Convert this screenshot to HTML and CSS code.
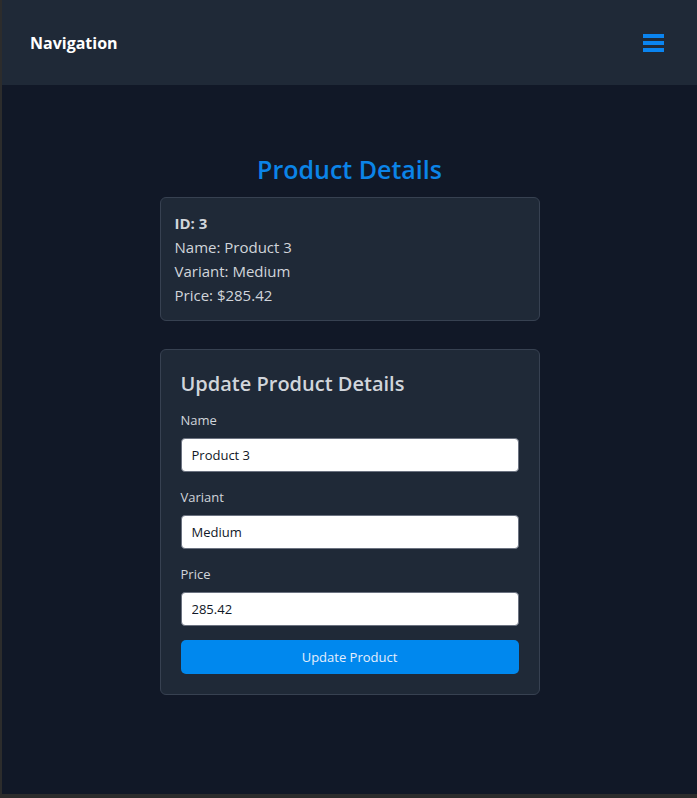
FILE: index.html
```html
<!DOCTYPE html>
<html lang="en">
<head>
<meta charset="utf-8">
<title>Product Details</title>
<link rel="stylesheet" href="styles.css">
</head>
<body>
<div class="frame">
  <header class="topbar">
    <span class="brand">Navigation</span>
    <button class="menu-btn" aria-label="Menu">
      <svg width="22" height="18" viewBox="0 0 22 18"><rect x="0" y="0" width="21" height="4" fill="#0a84f0"/><rect x="0" y="7" width="21" height="4" fill="#0a84f0"/><rect x="0" y="14" width="21" height="4" fill="#0a84f0"/></svg>
    </button>
  </header>
  <main class="content">
    <h1 class="page-title">Product Details</h1>
    <section class="card info">
      <p class="info-id">ID: 3</p>
      <p>Name: Product 3</p>
      <p>Variant: Medium</p>
      <p>Price: $285.42</p>
    </section>
    <section class="card form-card">
      <h2 class="form-title">Update Product Details</h2>
      <form class="form">
        <label class="field">
          <span class="label">Name</span>
          <input class="input" type="text" value="Product 3">
        </label>
        <label class="field">
          <span class="label">Variant</span>
          <input class="input" type="text" value="Medium">
        </label>
        <label class="field">
          <span class="label">Price</span>
          <input class="input" type="text" value="285.42">
        </label>
        <button class="submit" type="button">Update Product</button>
      </form>
    </section>
  </main>
</div>
</body>
</html>
```
FILE: styles.css
```css
* { box-sizing: border-box; }
html, body { margin: 0; padding: 0; }
body {
  font-family: "Open Sans", "Noto Sans", sans-serif;
  background: #2b2b2b;
}
.frame {
  height: 798px;
  border-left: 2px solid #2c2c2c;
  border-bottom: 4px solid #2c2c2c;
  background: #111827;
  display: flex;
  flex-direction: column;
}
.topbar {
  height: 85px;
  background: #1f2937;
  display: flex;
  align-items: center;
  justify-content: space-between;
  padding: 0 32px 0 28px;
}
.brand {
  color: #ffffff;
  font-weight: 700;
  font-size: 16px;
}
.menu-btn {
  background: none;
  border: 0;
  padding: 0;
  display: flex;
}
.content {
  width: 380px;
  margin: 0 auto;
  padding-top: 68px;
}
.page-title {
  margin: 0 0 12px;
  text-align: center;
  color: #0b84e8;
  font-size: 25px;
  line-height: 32px;
  font-weight: 600;
}
.card {
  background: #1f2937;
  border: 1px solid #374151;
  border-radius: 6px;
}
.info {
  padding: 13px 14px;
  color: #d1d5db;
  font-size: 15px;
  line-height: 24px;
}
.info p { margin: 0; }
.info .info-id { font-weight: 700; }
.form-card {
  margin-top: 28px;
  padding: 20px;
}
.form-title {
  margin: 0 0 12px;
  color: #d1d5db;
  font-size: 20px;
  line-height: 28px;
  font-weight: 600;
}
.form {
  display: flex;
  flex-direction: column;
}
.field {
  display: flex;
  flex-direction: column;
  gap: 8px;
  margin-bottom: 15px;
}
.field:last-of-type { margin-bottom: 14px; }
.label {
  color: #d1d5db;
  font-size: 13px;
  line-height: 20px;
}
.input {
  height: 34px;
  border: 1px solid #6b7280;
  border-radius: 4px;
  padding: 0 10px;
  font-family: inherit;
  font-size: 13px;
  color: #111827;
  background: #ffffff;
}
.submit {
  height: 34px;
  border: 0;
  border-radius: 5px;
  background: #0088ee;
  color: #e5eefc;
  font-family: inherit;
  font-size: 13px;
}
```
